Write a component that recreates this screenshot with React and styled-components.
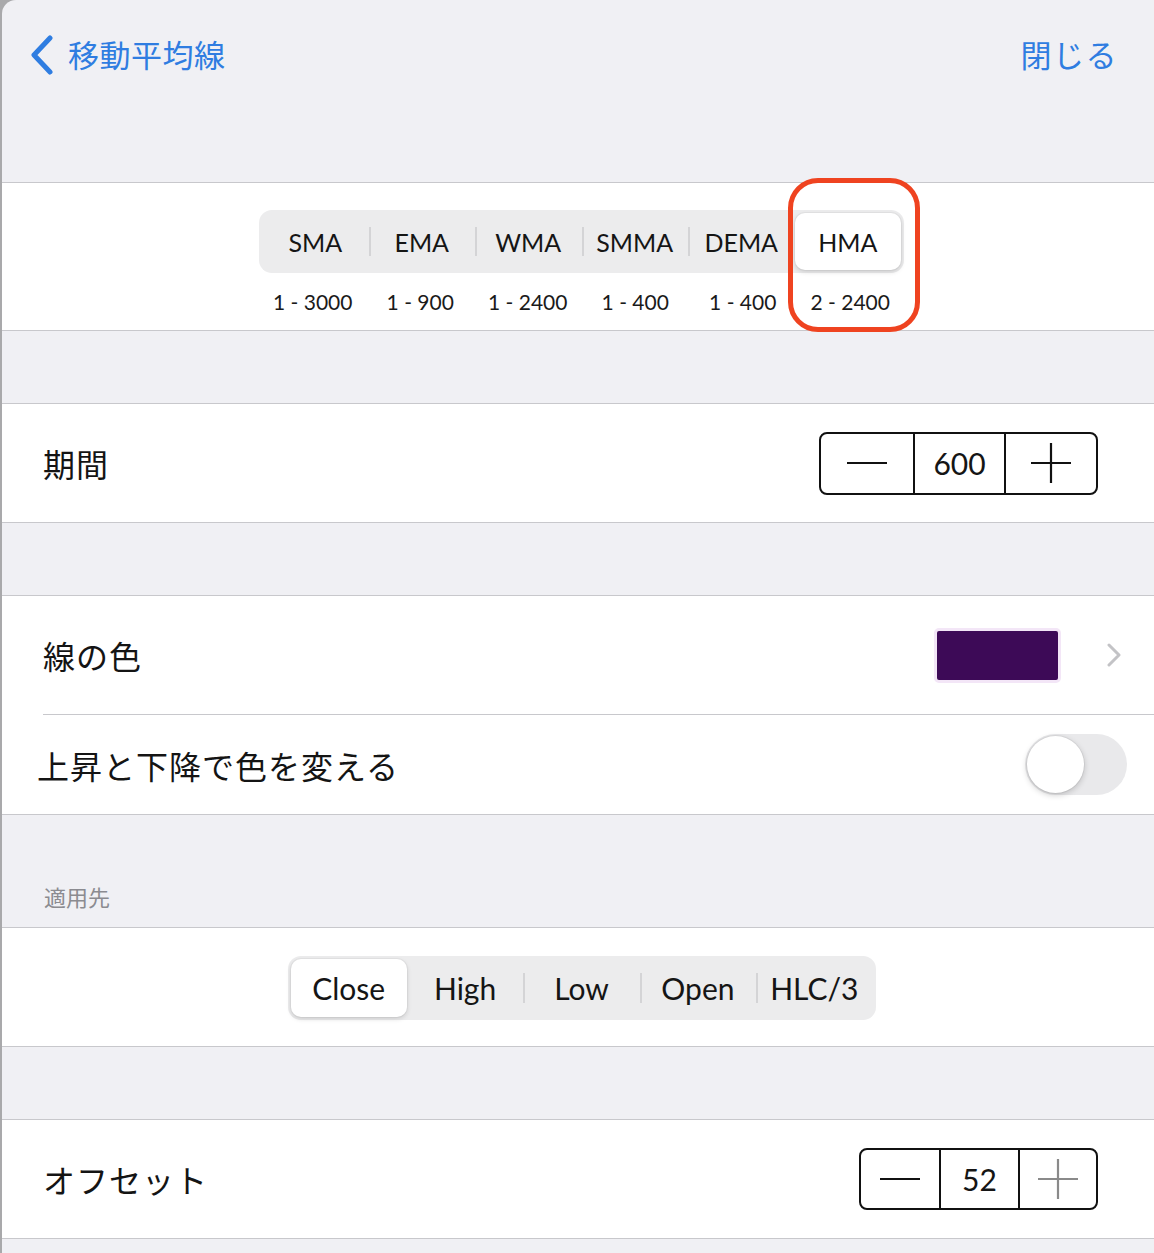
import React, { useState } from "react";
import styled, { createGlobalStyle } from "styled-components";

const GlobalStyle = createGlobalStyle`
  html, body {
    margin: 0;
    padding: 0;
    background: #a9a9ab;
  }
  * { box-sizing: border-box; }
`;

const FONT = `Lato, "Noto Sans CJK JP", sans-serif`;

const Sheet = styled.div`
  margin-left: 2px;
  min-height: 1253px;
  background: #f0f0f4;
  border-top-left-radius: 14px;
  overflow: hidden;
  font-family: ${FONT};
  color: #111;
`;

const Header = styled.header`
  height: 183px;
  display: flex;
  align-items: flex-start;
  justify-content: space-between;
  padding: 34px 36px 0 26px;
  border-bottom: 1px solid #c8c8cc;
`;

const BackButton = styled.button`
  display: flex;
  align-items: center;
  gap: 12px;
  background: none;
  border: none;
  padding: 0;
  color: #2f7de1;
  font-family: ${FONT};
  font-size: 31px;
  line-height: 42px;
  letter-spacing: 0.5px;
`;

const CloseLink = styled.button`
  background: none;
  border: none;
  padding: 0;
  color: #2f7de1;
  font-family: ${FONT};
  font-size: 31px;
  line-height: 42px;
  letter-spacing: 1.5px;
`;

const Section = styled.section`
  background: #fff;
  border-bottom: 1px solid #c8c8cc;
  border-top: ${(p) => (p.$noTop ? "none" : "1px solid #c8c8cc")};
`;

const Gap = styled.div`
  height: ${(p) => p.$h}px;
  display: flex;
  align-items: flex-end;
  padding: 0 0 ${(p) => p.$pb || 0}px 42px;
  color: #8b8b90;
  font-size: 22px;
  line-height: 26px;
`;

const TypeBlock = styled.div`
  height: 147px;
  display: flex;
  flex-direction: column;
  align-items: center;
  padding: 27px 0 0 7px;
`;

const TypeWrap = styled.div`
  position: relative;
  width: 645px;
`;

const Segmented = styled.div`
  display: flex;
  width: ${(p) => p.$w}px;
  height: ${(p) => p.$h}px;
  background: #ececed;
  border-radius: 13px;
  padding: 3px;
`;

const Segment = styled.div`
  flex: 1;
  position: relative;
  display: flex;
  align-items: center;
  justify-content: center;
  font-size: ${(p) => p.$fs}px;
  color: #151515;
  border-radius: 10px;
  background: ${(p) => (p.$active ? "#fff" : "transparent")};
  box-shadow: ${(p) =>
    p.$active ? "0 2px 5px rgba(0,0,0,0.14), 0 0 0 1px rgba(0,0,0,0.03)" : "none"};

  &::before {
    content: "";
    display: ${(p) => (p.$divider ? "block" : "none")};
    position: absolute;
    left: 0;
    top: 14px;
    bottom: 14px;
    width: 2px;
    background: #d4d4d6;
  }
`;

const RangeRow = styled.div`
  display: flex;
  width: 645px;
  margin-top: 13px;
`;

const Range = styled.div`
  flex: 1;
  text-align: center;
  font-size: 21px;
  line-height: 32px;
  color: #1a1a1a;
`;

const Highlight = styled.div`
  position: absolute;
  left: 529px;
  top: -32px;
  width: 132px;
  height: 154px;
  border: 5px solid #ef4320;
  border-radius: 30px;
  pointer-events: none;
`;

const Row = styled.div`
  height: ${(p) => p.$h || 118}px;
  display: flex;
  align-items: center;
  justify-content: space-between;
  padding: 0 ${(p) => p.$pr || 56}px 0 ${(p) => p.$pl || 41}px;
`;

const RowLabel = styled.div`
  font-size: 32px;
  letter-spacing: 1px;
  color: #141414;
`;

const Separator = styled.div`
  height: 1px;
  margin-left: 41px;
  background: #c8c8cc;
`;

const Stepper = styled.div`
  display: grid;
  grid-template-columns: repeat(3, 1fr);
  width: ${(p) => p.$w}px;
  height: ${(p) => p.$h}px;
  border: 2px solid #111;
  border-radius: 8px;
  overflow: hidden;
`;

const StepCell = styled.div`
  display: flex;
  align-items: center;
  justify-content: center;
  border-left: ${(p) => (p.$first ? "none" : "2px solid #111")};
  font-size: 30px;
  color: #151515;
`;

const ColorRight = styled.div`
  display: flex;
  align-items: center;
  gap: 46px;
`;

const Swatch = styled.div`
  width: 127px;
  height: 55px;
  border-radius: 5px;
  border: 3px solid #f3e6f7;
  background: #3d0a57;
`;

const Toggle = styled.div`
  width: 102px;
  height: 61px;
  border-radius: 31px;
  background: #e9e9eb;
  padding: 2px;
  display: flex;
  align-items: center;
`;

const Knob = styled.div`
  width: 57px;
  height: 57px;
  border-radius: 50%;
  background: #fff;
  box-shadow: 0 2px 6px rgba(0, 0, 0, 0.2), 0 0 0 1px rgba(0, 0, 0, 0.05);
`;

const SourceBlock = styled.div`
  height: 118px;
  display: flex;
  align-items: center;
  justify-content: center;
  padding: 1px 0 0 7px;
`;

const Minus = () => (
  <svg width="40" height="4" viewBox="0 0 40 4">
    <line x1="0" y1="2" x2="40" y2="2" stroke="#111" strokeWidth="2.2" />
  </svg>
);

const Plus = ({ color = "#111" }) => (
  <svg width="40" height="40" viewBox="0 0 40 40">
    <line x1="0" y1="20" x2="40" y2="20" stroke={color} strokeWidth="2.2" />
    <line x1="20" y1="0" x2="20" y2="40" stroke={color} strokeWidth="2.2" />
  </svg>
);

const types = [
  { name: "SMA", range: "1 - 3000" },
  { name: "EMA", range: "1 - 900" },
  { name: "WMA", range: "1 - 2400" },
  { name: "SMMA", range: "1 - 400" },
  { name: "DEMA", range: "1 - 400" },
  { name: "HMA", range: "2 - 2400" },
];

const sources = ["Close", "High", "Low", "Open", "HLC/3"];

const showDivider = (i, active) => i > 0 && i !== active && i - 1 !== active;

export default function App() {
  const [type] = useState(5);
  const [source] = useState(0);

  return (
    <>
      <GlobalStyle />
      <Sheet>
        <Header>
          <BackButton>
            <svg width="28" height="40" viewBox="0 0 28 40">
              <path
                d="M22 3 L6 20 L22 37"
                fill="none"
                stroke="#2f7de1"
                strokeWidth="5"
                strokeLinecap="round"
                strokeLinejoin="round"
              />
            </svg>
            移動平均線
          </BackButton>
          <CloseLink>閉じる</CloseLink>
        </Header>

        <Section $noTop>
          <TypeBlock>
            <TypeWrap>
              <Segmented $w={645} $h={63}>
                {types.map((t, i) => (
                  <Segment
                    key={t.name}
                    $fs={25}
                    $active={i === type}
                    $divider={showDivider(i, type)}
                  >
                    {t.name}
                  </Segment>
                ))}
              </Segmented>
              <RangeRow>
                {types.map((t) => (
                  <Range key={t.name}>{t.range}</Range>
                ))}
              </RangeRow>
              <Highlight />
            </TypeWrap>
          </TypeBlock>
        </Section>

        <Gap $h={72} />

        <Section>
          <Row>
            <RowLabel>期間</RowLabel>
            <Stepper $w={279} $h={63}>
              <StepCell $first>
                <Minus />
              </StepCell>
              <StepCell>600</StepCell>
              <StepCell>
                <Plus />
              </StepCell>
            </Stepper>
          </Row>
        </Section>

        <Gap $h={72} />

        <Section>
          <Row $pr={33}>
            <RowLabel>線の色</RowLabel>
            <ColorRight>
              <Swatch />
              <svg width="14" height="24" viewBox="0 0 14 24">
                <path
                  d="M2 2 L12 12 L2 22"
                  fill="none"
                  stroke="#c3c3c6"
                  strokeWidth="3"
                  strokeLinecap="round"
                  strokeLinejoin="round"
                />
              </svg>
            </ColorRight>
          </Row>
          <Separator />
          <Row $h={99} $pl={35} $pr={27}>
            <RowLabel>上昇と下降で色を変える</RowLabel>
            <Toggle>
              <Knob />
            </Toggle>
          </Row>
        </Section>

        <Gap $h={112} $pb={16}>
          適用先
        </Gap>

        <Section>
          <SourceBlock>
            <Segmented $w={588} $h={64}>
              {sources.map((s, i) => (
                <Segment
                  key={s}
                  $fs={30}
                  $active={i === source}
                  $divider={showDivider(i, source)}
                >
                  {s}
                </Segment>
              ))}
            </Segmented>
          </SourceBlock>
        </Section>

        <Gap $h={72} />

        <Section>
          <Row>
            <RowLabel>オフセット</RowLabel>
            <Stepper $w={239} $h={62}>
              <StepCell $first>
                <Minus />
              </StepCell>
              <StepCell>52</StepCell>
              <StepCell>
                <Plus color="#8a8a8a" />
              </StepCell>
            </Stepper>
          </Row>
        </Section>
      </Sheet>
    </>
  );
}
